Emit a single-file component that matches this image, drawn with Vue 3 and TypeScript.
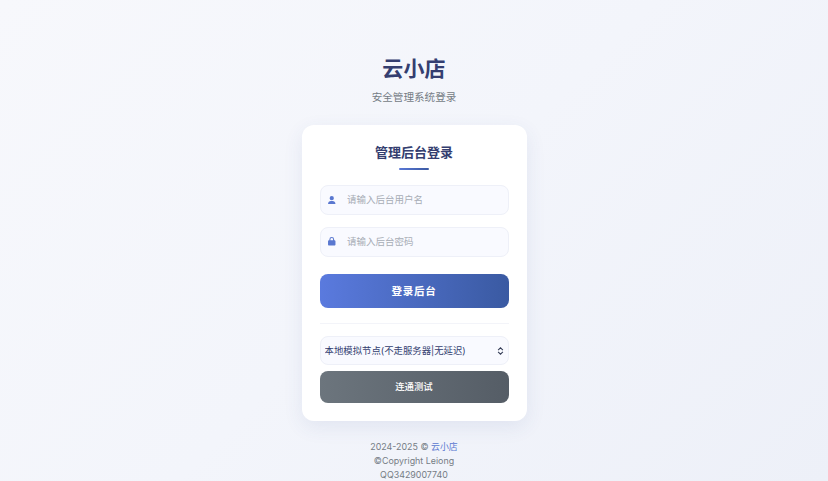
<script setup lang="ts">
const year = '2024-2025'
</script>

<template>
  <main class="page">
    <header class="brand">
      <h1>云小店</h1>
      <p>安全管理系统登录</p>
    </header>
    <section class="card">
      <h2>管理后台登录</h2>
      <div class="rule"></div>
      <div class="field">
        <svg class="icon" viewBox="0 0 448 512" aria-hidden="true"><path d="M224 256a128 128 0 1 0 0-256 128 128 0 0 0 0 256zm-45 48C79 304 0 383 0 482c0 16 14 30 30 30h388c16 0 30-14 30-30 0-99-79-178-178-178h-91z"/></svg>
        <input type="text" placeholder="请输入后台用户名" />
      </div>
      <div class="field">
        <svg class="icon" viewBox="0 0 448 512" aria-hidden="true"><path d="M144 144v48h160v-48a80 80 0 0 0-160 0zm-64 48v-48a144 144 0 0 1 288 0v48h16c35 0 64 29 64 64v192c0 35-29 64-64 64H64c-35 0-64-29-64-64V256c0-35 29-64 64-64h16z"/></svg>
        <input type="password" placeholder="请输入后台密码" />
      </div>
      <button class="login" type="button">登录后台</button>
      <div class="divider"></div>
      <div class="select-wrap">
        <select>
          <option>本地模拟节点(不走服务器|无延迟)</option>
        </select>
        <svg class="chevrons" viewBox="0 0 8 10" aria-hidden="true"><path d="M1 3.8 4 1l3 2.8M1 6.2 4 9l3-2.8"/></svg>
      </div>
      <button class="test" type="button">连通测试</button>
    </section>
    <footer class="foot">
      <div>{{ year }} © <a href="#">云小店</a></div>
      <div>©Copyright Leiong</div>
      <div>QQ3429007740</div>
    </footer>
  </main>
</template>

<style>
html, body { margin: 0; padding: 0; }
</style>

<style scoped>
.page {
  box-sizing: border-box;
  width: 828px;
  height: 481px;
  overflow: hidden;
  display: flex;
  flex-direction: column;
  align-items: center;
  padding-top: 54px;
  background: linear-gradient(135deg, #f7f8fc 0%, #f3f5fb 50%, #edf0f8 100%);
  font-family: Inter, "Noto Sans CJK SC", sans-serif;
}
.brand { text-align: center; margin-bottom: 18.5px; }
.brand h1 {
  margin: 0;
  font-size: 21px;
  line-height: 30px;
  font-weight: 700;
  color: #343e70;
  letter-spacing: 0.2px;
}
.brand p {
  margin: 5px 0 0;
  font-size: 10.6px;
  line-height: 17px;
  color: #757c85;
}
.card {
  box-sizing: border-box;
  width: 225px;
  height: 296px;
  padding: 18px;
  background: #fff;
  border-radius: 12px;
  box-shadow: 0 6px 20px rgba(60, 80, 140, 0.09);
  display: flex;
  flex-direction: column;
}
.card h2 {
  margin: 0;
  text-align: center;
  font-size: 13px;
  line-height: 18px;
  font-weight: 700;
  color: #343e70;
}
.rule {
  width: 30px;
  height: 2px;
  margin: 7px auto 15.5px;
  border-radius: 1px;
  background: linear-gradient(90deg, #5a78d6, #3b5aa3);
}
.field {
  flex: none;
  box-sizing: border-box;
  height: 30px;
  display: flex;
  align-items: center;
  gap: 11.5px;
  padding: 0 12px 0 7.5px;
  margin-bottom: 11.5px;
  background: #f9faff;
  border: 1px solid #eef0f8;
  border-radius: 8px;
}
.icon { width: 7.5px; height: 8.5px; flex: none; fill: #5a78d0; }
.field input {
  flex: 1;
  min-width: 0;
  border: 0;
  outline: 0;
  padding: 0;
  background: transparent;
  font: 9.5px/14px Inter, "Noto Sans CJK SC", sans-serif;
  color: #343e70;
}
.field input::placeholder { color: #a8adb6; opacity: 1; }
.login {
  flex: none;
  height: 34px;
  margin-top: 6px;
  padding: 2px 0 0;
  border: 0;
  border-radius: 8px;
  background: linear-gradient(90deg, #5a7ade, #3a5aa2);
  color: #fff;
  font: 700 10.5px/16px Inter, "Noto Sans CJK SC", sans-serif;
  letter-spacing: 0.7px;
}
.divider { flex: none; height: 1px; margin: 15px 0 11.5px; background: #f3f4f9; }
.select-wrap { position: relative; flex: none; height: 29.5px; }
.select-wrap select {
  box-sizing: border-box;
  width: 100%;
  height: 100%;
  appearance: none;
  padding: 1px 20px 0 4px;
  background: #f9faff;
  border: 1px solid #eef0f8;
  border-radius: 8px;
  outline: 0;
  color: #343e70;
  font: 9.4px/14px Inter, "Noto Sans CJK SC", sans-serif;
}
.chevrons {
  position: absolute;
  right: 5px;
  top: 11px;
  width: 7px;
  height: 8px;
  fill: none;
  stroke: #333b55;
  stroke-width: 1.3;
}
.test {
  flex: none;
  height: 31.5px;
  margin-top: 6px;
  border: 0;
  border-radius: 8px;
  background: linear-gradient(90deg, #6c757d, #555d66);
  color: #fff;
  font: 500 9.4px/14px Inter, "Noto Sans CJK SC", sans-serif;
}
.foot {
  margin-top: 19.5px;
  text-align: center;
  font-size: 8.9px;
  line-height: 14px;
  color: #757c85;
}
.foot a { color: #5a78d0; text-decoration: none; }
</style>
